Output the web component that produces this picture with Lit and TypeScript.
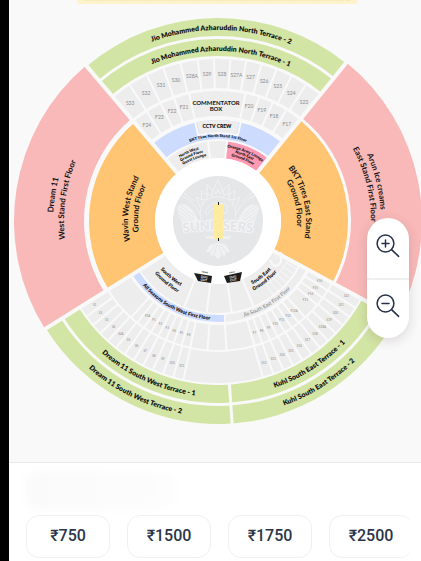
import { LitElement, html, svg, css } from "lit";
import { customElement, property } from "lit/decorators.js";

type Label = [string, number];

/** Point on a circle; angles are compass degrees, clockwise from north. */
const at = (r: number, deg: number): string => {
  const a = (deg * Math.PI) / 180;
  return `${(r * Math.sin(a)).toFixed(2)} ${(-r * Math.cos(a)).toFixed(2)}`;
};

const sector = (r0: number, r1: number, a0: number, a1: number, kind: string) => svg`
  <path class=${kind} d="M${at(r1, a0)}A${r1} ${r1} 0 0 1 ${at(r1, a1)}L${at(r0, a1)}A${r0} ${r0} 0 0 0 ${at(r0, a0)}Z"></path>`;

const dividers = (r0: number, r1: number, angles: number[], kind = "line") =>
  angles.map((a) => svg`<path class=${kind} d="M${at(r0, a)}L${at(r1, a)}"></path>`);

/** Text on an arc, centred on an angle; inward text reads along the lower side. */
const arcText = (text: string, r: number, angle: number, kind: string, inward = false) => {
  const id = `arc-${text.replace(/[^A-Za-z0-9]/g, "")}-${r}-${Math.round(angle + 360)}`;
  const from = inward ? angle + 60 : angle - 60;
  const to = inward ? angle - 60 : angle + 60;
  return svg`
    <path id=${id} class="guide" d="M${at(r, from)}A${r} ${r} 0 0 ${inward ? 0 : 1} ${at(r, to)}"></path>
    <text class=${kind}><textPath href="#${id}" startOffset="50%">${text}</textPath></text>`;
};

const blockLabels = (labels: Label[], r: number, kind: string) =>
  labels.map(([name, deg]) => {
    const [x, y] = at(r, deg).split(" ");
    return svg`<text class=${kind} x=${x} y=${y} dy="0.35em">${name}</text>`;
  });

const NORTH_SECOND: Label[] = [
  ["S33", -36.7], ["S32", -29.3], ["S31", -22.8], ["S30", -16.6], ["S28A", -10.2], ["S29", -4.3], ["S28", 1.6],
  ["S27A", 7.2], ["S27", 12.8], ["S26", 18.3], ["S25", 24], ["S24", 29.9], ["S23", 35.8],
];
const NORTH_FIRST: Label[] = [
  ["F24", -36.7], ["F23", -29.5], ["F22", -22.7], ["F21", -16.6], ["F20", 15.1], ["F19", 21.6], ["F18", 28.1], ["F17", 35.3],
];
const run = (names: string[], start: number, step: number): Label[] => names.map((n, i) => [n, start + i * step]);
const SOUTH_SECOND: Label[] = [
  ...run(["S1", "S2", "S3", "S4", "S4A", "S5", "S6", "S7", "S8", "S9", "S10", "S11"], 235.9, -3.8),
  ...run(["S12", "S13", "S14", "S15", "S16", "S17", "S18", "S18A", "S19", "S20", "S21", "S22"], 162, -3.78),
];
const SOUTH_FIRST: Label[] = [
  ...run(["F1A", "F1", "F2", "F3", "F4", "F5", "F6"], 216.6, -3.7),
  ...run(["F7", "F8", "F9", "F10", "F11", "F12", "F12A"], 162, -3.7),
  ...run(["F13", "F14", "F15", "F16"], 132.2, -3.9),
];
const steps = (start: number, step: number, n: number) => Array.from({ length: n }, (_, i) => start + i * step);

@customElement("stadium-map")
export class StadiumMap extends LitElement {
  static styles = css`
    :host { display: block; }
    svg { display: block; width: 100%; height: auto; }
    text { font-family: Lato, "Noto Sans", sans-serif; text-anchor: middle; fill: #111; }
    .guide { fill: none; }
    .green { fill: #d3e5a5; }
    .pink { fill: #f9b9b9; }
    .orange { fill: #ffc573; }
    .blue { fill: #cddbff; }
    .rose { fill: #ff9ab4; }
    .seat { fill: #ededed; }
    .line { stroke: #f9f9f9; stroke-width: 2; fill: none; }
    .thin { stroke: #f9f9f9; stroke-width: 1; fill: none; }
    .aisle { stroke: #f9f9f9; stroke-width: 4; }
    .gap { stroke: #f9f9f9; stroke-width: 3; }
    .terrace { font-size: 7px; font-weight: 800; }
    .stand { font-size: 8px; font-weight: 700; }
    .box { font-size: 6px; font-weight: 700; }
    .crew { font-size: 5px; font-weight: 800; }
    .small { font-size: 5px; font-weight: 800; }
    .fine { font-size: 5px; font-weight: 800; }
    .lounge { font-size: 4px; font-weight: 800; }
    .quiet { font-size: 5px; font-weight: 500; fill: #808080; }
    .block { font-size: 5px; fill: #8c8c8c; }
    .tiny { font-size: 3px; fill: #8c8c8c; }
    .white { fill: #fff; }
    .field { fill: #e5e6e8; }
    .pitch { fill: #fdeba0; }
    .ink { fill: #1c1c1c; }
    .crest { fill: none; stroke: #f1f1f2; stroke-width: 1; stroke-linejoin: round; stroke-linecap: round; }
    .feather { fill: #f0f1f2; }
    .vane { fill: none; stroke: #e5e6e8; stroke-width: 1; }
    .team { font-size: 13px; font-weight: 900; fill: #e3e4e6; stroke: #f5f5f6; stroke-width: 2; paint-order: stroke; }
    .city { font-size: 4px; font-weight: 900; fill: #f6f6f7; }
    .sign { font-size: 3px; font-weight: 700; fill: #fff; }
    .team-side { font-size: 2px; font-weight: 700; }
    .banner { fill: #fdf4cb; }
    .dots { stroke: #ecdca6; stroke-width: 1; stroke-dasharray: 2 1; }
  `;

  private crest() {
    const wing = svg`
      <path class="feather" d="M-41 -14C-34 -21 -26 -14 -20 -1L-23 6L-34 6C-37 0 -40 -6 -41 -14Z"></path>
      <path class="vane" d="M-40 -18L-24 -5M-41 -15L-24 -2M-41 -11L-24 1M-40 -7L-25 4M-38 -3L-28 5"></path>
      <path class="crest" d="M-37 -25C-29 -23 -22 -16 -18 -7M-34 -28L-24 -20"></path>
      <path class="crest" d="M-18 -14L-22 -24L-16 -21L-17 -31L-11 -26L-11 -37L-5 -30L0 -41"></path>
      <path class="crest" d="M-14 -16L-16 -22L-11 -21L-11 -28L-6 -25L-5 -31L-2 -27L0 -32"></path>
      <path class="feather" d="M0 22L-8 24L-12 31L-8 31L-7 35L-4 34L0 38Z"></path>
      <path class="vane" d="M-3 24L-8 31M-1 24L-4 34"></path>`;
    return svg`
      <g>${wing}</g>
      <g transform="scale(-1 1)">${wing}</g>
      <path class="crest" d="M-17 -2C-21 -19 -10 -24 0 -24C11 -24 20 -17 17 -2M-13 -9C-10 -17 -4 -19 2 -18C10 -17 12 -11 7 -7L3 -12C-2 -14 -8 -12 -10 -7Z"></path>
      <path id="crest-arc" class="guide" d="M-42 13Q0 5 42 13"></path>
      <text class="team"><textPath href="#crest-arc" startOffset="50%">SUNRISERS</textPath></text>
      <text class="city" x="0" y="18">HYDERABAD</text>`;
  }

  render() {
    return html`
      <svg viewBox="-209 -221 412 462" role="img" aria-label="Stadium seating map">
        <rect class="banner" x="-141" y="-231" width="281" height="14" rx="3"></rect>
        <path class="dots" d="M-134 -221H133"></path>

        ${sector(185, 203, -40.3, 39, "green")}
        ${sector(165, 182, -40.3, 39, "green")}
        ${sector(133, 162, -40.3, 39, "seat")}
        ${sector(105, 130, -40.3, 39, "seat")}
        ${sector(82, 101, -40.3, 39, "blue")}
        ${sector(88, 103, -13, 13, "line")}
        ${sector(89, 101, -12, 12, "seat")}
        ${sector(63, 80, -40.3, 6.5, "seat")}
        ${sector(63, 80, 6.5, 39, "rose")}
        ${dividers(131, 163, [-33, -26, -19.7, -13.4, -7.2, -1.4, 4.4, 10, 15.5, 21.1, 26.9, 32.8])}
        ${dividers(103, 131, [-33.1, -26, -19.7, -12.8, 12.2, 18.4, 24.9, 31.7])}
        ${dividers(62, 81, [-7.2, 6.5])}

        ${sector(133, 204, 39, 118.4, "pink")}
        ${sector(63, 130, 39, 118.4, "orange")}
        ${sector(134, 204, 238, 319.7, "pink")}
        ${sector(63, 129, 238, 319.7, "orange")}

        ${sector(185, 203, 118.4, 238, "green")}
        ${sector(164, 182, 118.4, 238, "green")}
        ${sector(131, 162, 118.4, 238, "seat")}
        ${sector(104, 129, 118.4, 238, "seat")}
        ${sector(94, 101, 176.5, 238, "blue")}
        ${sector(94, 101, 118.4, 175.5, "seat")}
        ${sector(63, 92, 118.4, 238, "seat")}
        ${dividers(130, 163, [...steps(234, -3.8, 11), 192.3])}
        ${dividers(130, 163, [164, ...steps(160.1, -3.78, 11)])}
        ${dividers(103, 130, [222, ...steps(218.5, -3.7, 7), 192.4, 184.7, 176.2])}
        ${dividers(103, 130, [163.7, ...steps(160.1, -3.7, 7), ...steps(130.2, -3.9, 3)])}
        ${dividers(62, 93, [201.5, 187, 171.5, 157.4])}
        ${dividers(80, 93, steps(143, -3.6, 7), "thin")}
        <path class="thin" d="M${at(80, 143)}A80 80 0 0 0 ${at(80, 120)}"></path>
        <path class="line" d="M${at(65, 127)}Q${at(76, 131)} ${at(75, 123)}V31"></path>

        ${dividers(62, 206, [-40.3, 39, 118.4, 238], "aisle")}
        ${dividers(162, 206, [176], "gap")}

        <circle class="white" r="63"></circle>
        <circle class="field" r="45"></circle>
        ${this.crest()}
        <rect class="pitch" x="-4" y="-17" width="9" height="35"></rect>
        <rect class="ink" x="0" y="-19" width="1" height="3"></rect>
        <rect class="ink" x="0" y="17" width="1" height="3"></rect>

        <path class="ink" d="M-24 52L-6 55L-7 62L-20 60Z"></path>
        <path class="ink" d="M24 51L6 55L9 62L22 60Z"></path>
        <g transform="rotate(8 -14 57)">
          <text class="sign" x="-14" y="57">DUG</text><text class="sign" x="-14" y="60">OUT</text>
          <text class="team-side" x="-14" y="52">HOME</text>
        </g>
        <g transform="rotate(-10 15 57)">
          <text class="sign" x="15" y="57">DUG</text><text class="sign" x="15" y="60">OUT</text>
          <text class="team-side" x="15" y="52">AWAY</text>
        </g>

        ${arcText("Jio Mohammed Azharuddin North Terrace - 2", 191, 1, "terrace")}
        ${arcText("Jio Mohammed Azharuddin North Terrace - 1", 170, 1, "terrace")}
        ${arcText("Dream 11 South West Terrace - 1", 176, 204.4, "terrace", true)}
        ${arcText("Dream 11 South West Terrace - 2", 196, 206, "terrace", true)}
        ${arcText("Kuhl South East Terrace - 1", 176, 147.5, "terrace", true)}
        ${arcText("Kuhl South East Terrace - 2", 196, 148, "terrace", true)}
        ${arcText("Dream 11", 165, -81, "stand")}
        ${arcText("West Stand First Floor", 154, -82, "stand")}
        ${arcText("Wavin West Stand", 90, -82, "stand")}
        ${arcText("Ground Floor", 80, -81, "stand")}
        ${arcText("Arun Ice creams", 163, 76, "stand")}
        ${arcText("East Stand First Floor", 153, 76, "stand")}
        ${arcText("BKT Tires East Stand", 88, 77, "stand")}
        ${arcText("Ground Floor", 79, 77, "stand")}
        ${arcText("South West", 75, 220, "small", true)}
        ${arcText("Ground Floor", 82, 220, "small", true)}
        ${arcText("South East", 72, 142, "small", true)}
        ${arcText("Ground Floor", 78, 142, "small", true)}
        ${arcText("All Seasons South West First Floor", 99, 207, "fine", true)}
        ${arcText("Jio South East First Floor", 99, 149, "quiet", true)}
        ${arcText("BKT Tires North Stand 1st Floor", 84, 0, "lounge")}
        ${arcText("North West", 74, -23, "lounge")}
        ${arcText("Ground Floor", 70, -22, "lounge")}
        ${arcText("Guest Lounge", 66, -21, "lounge")}
        ${arcText("Orange Army Lounge", 74, 22, "lounge")}
        ${arcText("North East", 70, 22, "lounge")}
        ${arcText("Ground Floor", 66, 22, "lounge")}
        <text class="box" x="-2" y="-116">COMMENTATOR</text>
        <text class="box" x="-2" y="-110">BOX</text>
        <text class="crew" x="-1" y="-93">CCTV CREW</text>
        ${blockLabels(NORTH_SECOND, 147, "block")}
        ${blockLabels(NORTH_FIRST, 119, "block")}
        ${blockLabels(SOUTH_SECOND, 149, "tiny")}
        ${blockLabels(SOUTH_FIRST, 118, "tiny")}
      </svg>`;
  }
}

@customElement("zoom-control")
export class ZoomControl extends LitElement {
  static styles = css`
    :host { display: flex; flex-direction: column; width: 42px; background: #fff; border-radius: 21px; box-shadow: 0 3px 12px rgba(60, 40, 40, 0.16); overflow: hidden; }
    button { display: flex; align-items: center; justify-content: center; height: 60px; padding: 0 0 4px; border: 0; background: none; cursor: pointer; }
    button + button { border-top: 2px solid #efefef; padding-bottom: 6px; }
    svg { width: 24px; height: 24px; fill: none; stroke: #263049; stroke-width: 1.5; stroke-linecap: round; }
  `;
  render() {
    return html`
      <button aria-label="Zoom in"><svg viewBox="0 0 24 24"><circle cx="9.5" cy="9.5" r="8.4"></circle><path d="M15.6 15.6L22.6 22.4M9.5 6V13M6 9.5H13"></path></svg></button>
      <button aria-label="Zoom out"><svg viewBox="0 0 24 24"><circle cx="9.5" cy="9.5" r="8.4"></circle><path d="M15.6 15.6L22.6 22.4M6 9.5H13"></path></svg></button>`;
  }
}

@customElement("price-row")
export class PriceRow extends LitElement {
  @property({ attribute: false }) prices: number[] = [];
  static styles = css`
    :host { display: flex; gap: 17px; overflow: hidden; }
    button { flex: 0 0 84px; height: 43px; padding: 0 0 2px; border: 1px solid #f0f0f1; border-radius: 13px; background: #fff; color: #2b3548; font: 500 16px/20px Roboto, sans-serif; cursor: pointer; }
  `;
  render() {
    return this.prices.map((p) => html`<button>₹${p}</button>`);
  }
}

@customElement("app-root")
export class AppRoot extends LitElement {
  static styles = css`
    :host { display: flex; flex-direction: column; box-sizing: border-box; min-height: 100vh; border-left: 9px solid #000; background: #fff; }
    .map { position: relative; background: #f9f9f9; border-bottom: 1px solid #e9e9e9; overflow: hidden; }
    zoom-control { position: absolute; right: 12px; top: 218px; }
    .panel { display: flex; flex-direction: column; gap: 5px; padding: 9px 12px 3px 17px; }
    .smudge { width: 152px; height: 38px; border-radius: 20px 40px 40px 20px; background: linear-gradient(100deg, #fafafa, #fcfcfc 60%, #fdfdfd); filter: blur(4px); }
  `;
  render() {
    return html`
      <section class="map">
        <stadium-map></stadium-map>
        <zoom-control></zoom-control>
      </section>
      <section class="panel">
        <div class="smudge"></div>
        <price-row .prices=${[750, 1500, 1750, 2500]}></price-row>
      </section>`;
  }
}
